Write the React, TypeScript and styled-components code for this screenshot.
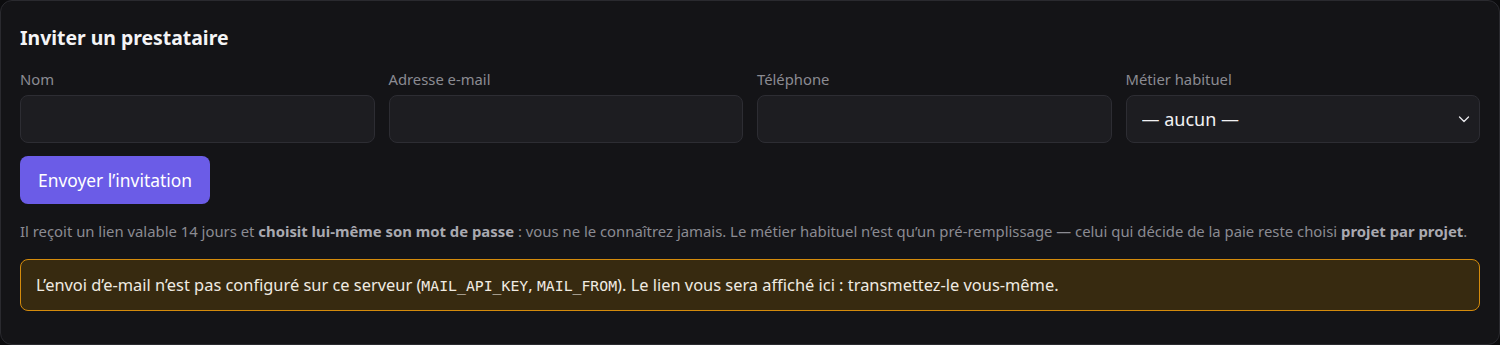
import React from "react";
import styled, { createGlobalStyle } from "styled-components";

const Global = createGlobalStyle`
  html, body { margin: 0; padding: 0; background: #0c0c0e; }
  body { font-family: "Noto Sans", "Open Sans", sans-serif; }
  * { box-sizing: border-box; }
`;

const Card = styled.section`
  width: 1500px;
  height: 345px;
  background: #141417;
  border: 1px solid #2a2a2f;
  border-radius: 12px;
  padding: 24px 19px 0 19px;
  display: flex;
  flex-direction: column;
`;

const Title = styled.h2`
  margin: 0;
  font-size: 19.4px;
  line-height: 26px;
  font-weight: 700;
  color: #f4f4f6;
`;

const FieldGrid = styled.div`
  margin-top: 18px;
  display: grid;
  grid-template-columns: repeat(4, 1fr);
  column-gap: 14px;
`;

const Field = styled.label`
  display: flex;
  flex-direction: column;
  gap: 6px;
`;

const LabelText = styled.span`
  font-size: 14.8px;
  line-height: 20px;
  color: #8b8b92;
`;

const controlStyles = `
  height: 48px;
  width: 100%;
  background: #1d1d21;
  border: 1px solid #2d2d33;
  border-radius: 8px;
  color: #f2f2f4;
  font-family: inherit;
  font-size: 18px;
  outline: none;
`;

const Input = styled.input`
  ${controlStyles}
  padding: 0 14px;
`;

const SelectWrap = styled.div`
  position: relative;
`;

const Select = styled.select`
  ${controlStyles}
  appearance: none;
  padding: 0 36px 0 15px;
`;

const Chevron = styled.svg`
  position: absolute;
  right: 10px;
  top: 18px;
  width: 12px;
  height: 12px;
  pointer-events: none;
`;

const Button = styled.button`
  margin-top: 13px;
  align-self: flex-start;
  height: 48px;
  padding: 0 18px;
  background: #6b5ce7;
  color: #ffffff;
  border: none;
  border-radius: 8px;
  font-family: inherit;
  font-size: 17.4px;
  cursor: pointer;
`;

const Help = styled.p`
  margin: 16px 0 0 0;
  font-size: 14.86px;
  line-height: 22px;
  color: #8b8b92;
  white-space: nowrap;
  b { color: #a9a9b0; font-weight: 700; }
`;

const Warning = styled.div`
  margin-top: 17px;
  background: #372a10;
  border: 1px solid #d48b0c;
  border-radius: 8px;
  padding: 13px 15px 12px 15px;
  font-size: 16.4px;
  line-height: 24px;
  color: #f0ebe2;
  code {
    font-family: "DejaVu Sans Mono", "Liberation Mono", monospace;
    font-size: 14.8px;
  }
`;

export default function App() {
  return (
    <>
      <Global />
      <Card>
        <Title>Inviter un prestataire</Title>
        <FieldGrid>
          <Field>
            <LabelText>Nom</LabelText>
            <Input type="text" />
          </Field>
          <Field>
            <LabelText>Adresse e-mail</LabelText>
            <Input type="email" />
          </Field>
          <Field>
            <LabelText>Téléphone</LabelText>
            <Input type="tel" />
          </Field>
          <Field>
            <LabelText>Métier habituel</LabelText>
            <SelectWrap>
              <Select defaultValue="">
                <option value="">— aucun —</option>
              </Select>
              <Chevron viewBox="0 0 12 12" fill="none">
                <path d="M1.5 4 L6 8.5 L10.5 4" stroke="#e8e8ec" strokeWidth="1.3" strokeLinecap="round" strokeLinejoin="round" />
              </Chevron>
            </SelectWrap>
          </Field>
        </FieldGrid>
        <Button>Envoyer l’invitation</Button>
        <Help>
          Il reçoit un lien valable 14 jours et <b>choisit lui-même son mot de passe</b> : vous ne le connaîtrez jamais. Le métier habituel n’est qu’un pré-remplissage — celui qui décide de la paie reste choisi <b>projet par projet</b>.
        </Help>
        <Warning>
          L’envoi d’e-mail n’est pas configuré sur ce serveur (<code>MAIL_API_KEY</code>, <code>MAIL_FROM</code>). Le lien vous sera affiché ici : transmettez-le vous-même.
        </Warning>
      </Card>
    </>
  );
}
